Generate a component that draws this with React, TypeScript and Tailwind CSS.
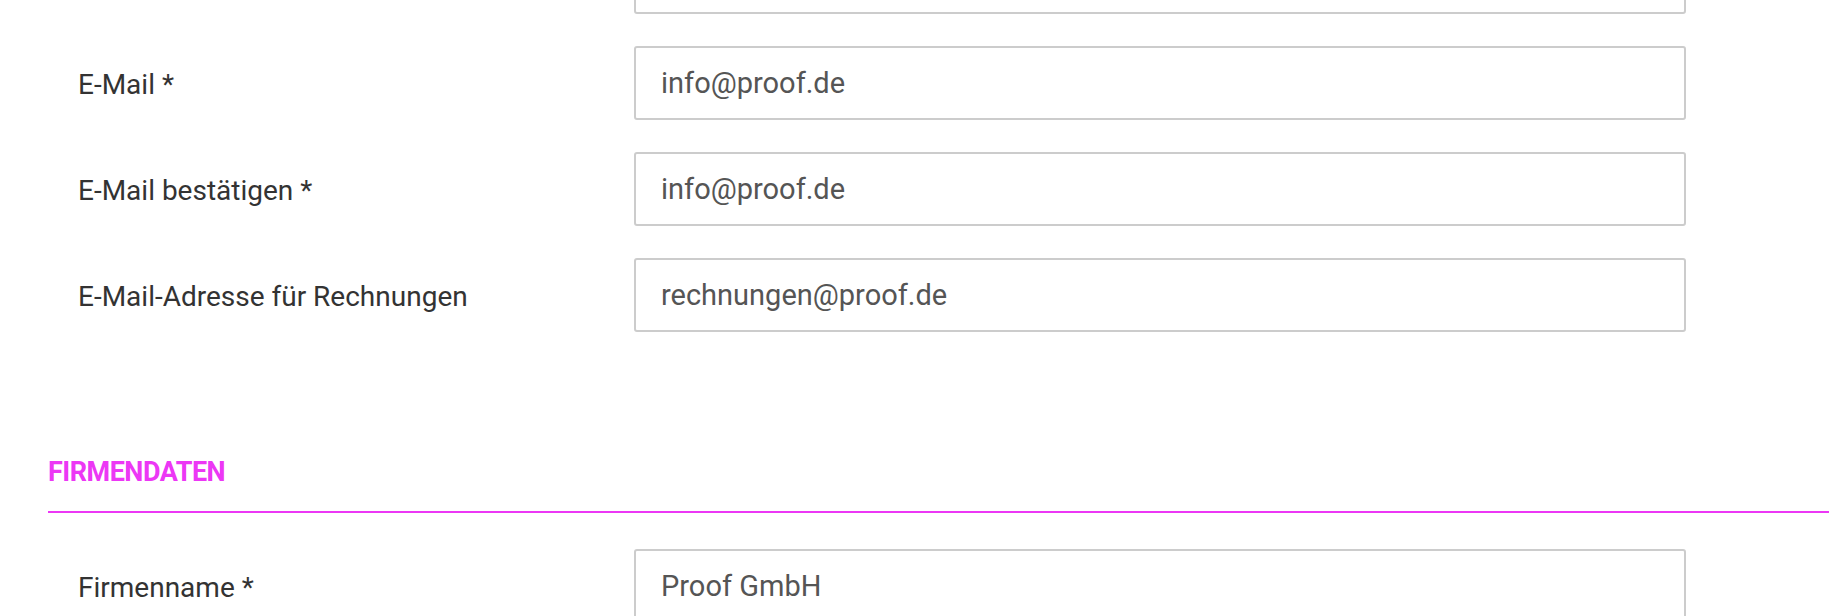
const font = { fontFamily: "Roboto, 'Liberation Sans', sans-serif" };

function Row({ label, value, first }: { label: string; value: string; first?: boolean }) {
  return (
    <div className={`flex items-center ${first ? "-mt-[60px]" : ""}`}>
      <label className="w-[634px] shrink-0 pl-[78px] pt-[4px] text-[28px] text-[#333333]">{label}</label>
      <input
        type="text"
        defaultValue={value}
        className="h-[74px] w-[1052px] shrink-0 rounded-[3px] border-2 border-[#cccccc] bg-white px-[25px] text-[29px] text-[#555555] outline-none"
        style={font}
      />
    </div>
  );
}

export default function App() {
  return (
    <div className="min-h-screen overflow-hidden bg-white" style={font}>
      <div className="flex flex-col gap-[32px]">
        <Row first label="" value="" />
        <Row label="E-Mail *" value="info@proof.de" />
        <Row label="E-Mail bestätigen *" value="info@proof.de" />
        <Row label="E-Mail-Adresse für Rechnungen" value="rechnungen@proof.de" />
      </div>

      <div className="ml-[48px] mt-[125px] border-b-2 border-[#ec37f5] pb-[24px]">
        <h2 className="text-[27px] font-bold uppercase leading-[30px] tracking-[-0.5px] text-[#ec37f5]">Firmendaten</h2>
      </div>

      <div className="mt-[36px] flex flex-col gap-[32px]">
        <Row label="Firmenname *" value="Proof GmbH" />
      </div>
    </div>
  );
}
